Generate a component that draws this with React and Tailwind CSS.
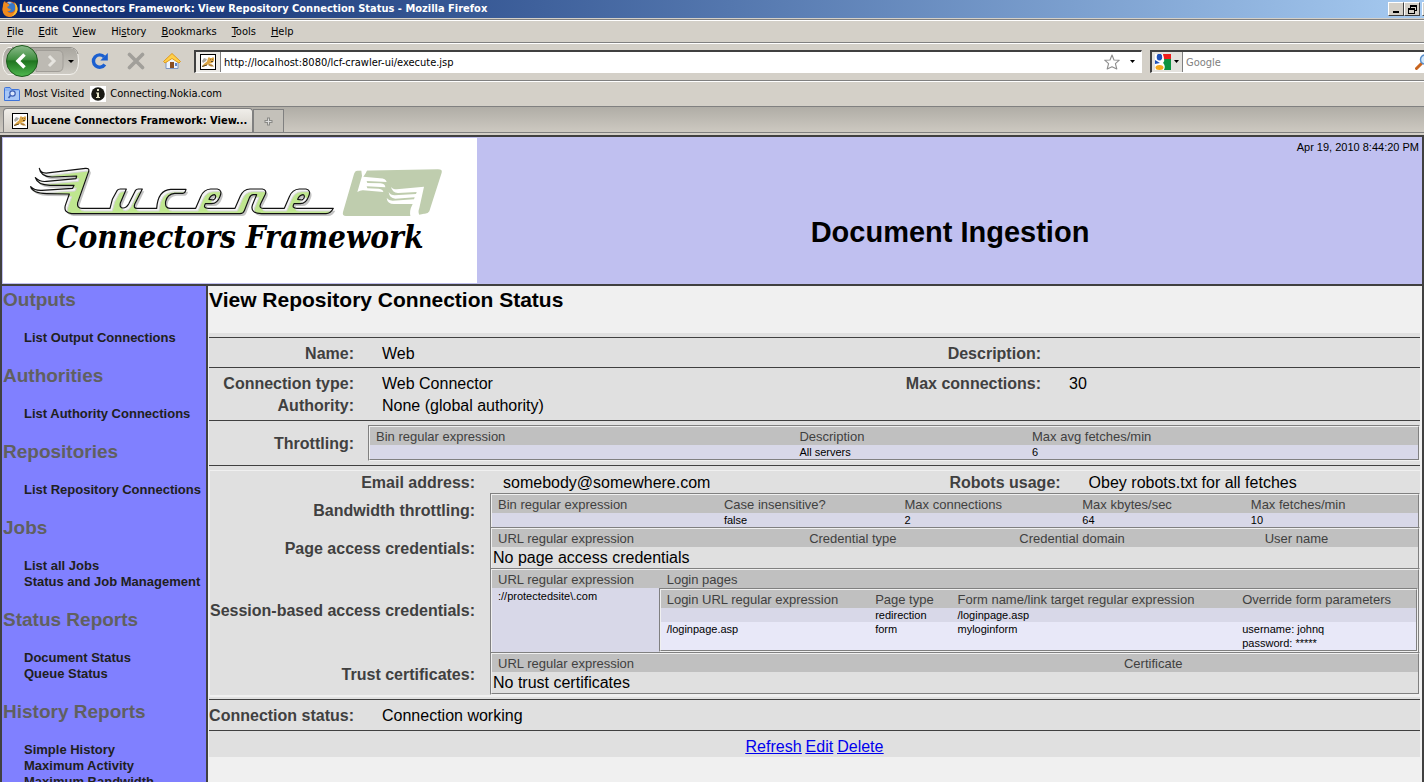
import React from "react";

const chromeFont = "font-['DejaVu_Sans_Condensed','DejaVu_Sans',sans-serif]";

/* ---------- small drawings ---------- */

function FirefoxIcon() {
  return (
    <svg width="16" height="16" viewBox="0 0 16 16" aria-hidden="true">
      <circle cx="8" cy="8" r="7.5" fill="#d9601a" />
      <circle cx="8.5" cy="6.5" r="5" fill="#3a78c8" />
      <path d="M1 4 Q1 1 3 0 Q3 2 6 3 Q8 3 7 5 L5 6 Q6 8 9 8 Q8 11 5 10 Q8 14 12 11 Q14 9 13 5 Q16 8 15 11 Q12 16 7 16 Q1 15 0.5 9 Z" fill="#f08a1d" />
      <path d="M12 1 Q16 4 15.5 9 Q14.5 14 9 15.5 Q14 12 13.5 6 Q13 3 12 1 Z" fill="#f8c33a" />
      <path d="M5 1 Q8 0 10 2 Q8 3 7 2.5 Z" fill="#9cc6ee" />
    </svg>
  );
}

function CatIcon() {
  return (
    <svg width="16" height="16" viewBox="0 0 16 16" aria-hidden="true">
      <rect x="0.5" y="0.5" width="15" height="15" fill="#fff" stroke="#000" />
      <path d="M2 7 L4 4 L7 5 L6 7 L3 9 Z" fill="#a8a8a4" />
      <path d="M8 4 L9 3 L10 4 H12 L13 3 L14 4 V7 L12 9 L10 9.500 L7 11 L3 13 L2 12 L5 9 L7 7.500 Z" fill="#dca545" />
      <path d="M9 10 L12 10.500 L14 12.500 L11 12.500 L8 11 Z" fill="#b07c2c" />
      <path d="M2 12.500 L7 11 M10.500 5.500 H11 M12.500 5.500 H13 M11 7.500 H13" stroke="#4a3a1c" strokeWidth="0.9" />
    </svg>
  );
}

function NavButtons() {
  return (
    <div className="flex h-8 w-[77px] shrink-0 items-center">
      <svg width="77" height="34" viewBox="0 0 77 34" aria-hidden="true">
        <defs>
          <linearGradient id="back" x1="0" y1="0" x2="0" y2="1">
            <stop offset="0" stopColor="#8cba8c" />
            <stop offset="0.45" stopColor="#3f8f3f" />
            <stop offset="0.5" stopColor="#1f741f" />
            <stop offset="1" stopColor="#4fb84f" />
          </linearGradient>
          <linearGradient id="pill" x1="0" y1="0" x2="0" y2="1">
            <stop offset="0" stopColor="#a9a69f" />
            <stop offset="1" stopColor="#cfccc5" />
          </linearGradient>
        </defs>
        <path d="M6 3.500 H68 Q76.500 3.500 76.500 17 Q76.500 30.500 68 30.500 H6 Q0.500 27 0.500 17 Q0.500 7 6 3.500 Z" fill="url(#pill)" stroke="#f4f2ee" />
        <path d="M10 3.500 H68 Q74 3.500 76 10" fill="none" stroke="#8e8b85" />
        <path d="M34 6.500 H56 Q61 6.500 61 12 V22 Q61 27.500 56 27.500 H34 Z" fill="#bdbab3" stroke="#a09d97" />
        <path d="M47 12 L52 17 L47 22" fill="none" stroke="#e6e4df" strokeWidth="3" />
        <circle cx="20" cy="17" r="15.500" fill="url(#back)" stroke="#1d5c1d" />
        <path d="M22.500 10.500 L16 17 L22.500 23.500" fill="none" stroke="#fff" strokeWidth="3.500" />
        <path d="M66 16 H72 L69 19 Z" fill="#000" />
      </svg>
    </div>
  );
}

function ReloadIcon() {
  return (
    <svg width="18" height="18" viewBox="0 0 18 18" aria-hidden="true">
      <path d="M13.800 12.500 A6.200 6.200 0 1 1 13.200 4.800" fill="none" stroke="#1b5fd0" strokeWidth="3.400" />
      <path d="M16.800 1 V8.500 H9.300 Z" fill="#1b5fd0" />
    </svg>
  );
}

function StopIcon() {
  return (
    <svg width="18" height="18" viewBox="0 0 18 18" aria-hidden="true">
      <path d="M2.500 2.500 L15.500 15.500 M15.500 2.500 L2.500 15.500" stroke="#a19f9a" strokeWidth="3.600" strokeLinecap="round" />
    </svg>
  );
}

function HomeIcon() {
  return (
    <svg width="20" height="18" viewBox="0 0 20 18" aria-hidden="true">
      <path d="M4 9 L10 4 L16 9 V16.500 H4 Z" fill="#eef3fb" stroke="#7d96c4" />
      <path d="M1.500 9.500 L10 1.500 L18.500 9.500 L17 11 L10 6.500 L3 11 Z" fill="#ffd04a" stroke="#e0991c" />
      <rect x="8" y="10" width="4" height="6" fill="#8a4f22" />
      <rect x="13" y="11" width="2" height="3" fill="#5d85cc" />
    </svg>
  );
}

function StarIcon() {
  return (
    <svg width="16" height="16" viewBox="0 0 16 16" aria-hidden="true">
      <path d="M8 1 L10 6 L15.300 6.200 L11.400 9.600 L12.800 15 L8 12.800 L3.200 15 L4.600 9.600 L0.700 6.200 L6 6 Z" fill="#fff" stroke="#8c8c8c" strokeWidth="1.100" strokeLinejoin="round" />
    </svg>
  );
}

function Caret() {
  return (
    <svg width="5" height="3" viewBox="0 0 5 3" aria-hidden="true">
      <path d="M0 0 H5 L2.500 3 Z" fill="#000" />
    </svg>
  );
}

function GoogleIcon() {
  return (
    <svg width="16" height="16" viewBox="0 0 16 16" aria-hidden="true">
      <rect width="16" height="16" fill="#fff" />
      <path d="M8 0 H16 V5 H9 Z" fill="#ee1c1c" />
      <path d="M9 5 H16 V16 H9 Q11 12 8 9 Q10 7 9 5 Z" fill="#0c9340" />
      <ellipse cx="4.500" cy="3" rx="2.800" ry="3.500" fill="#1d50b8" />
      <path d="M0 6 L5 9 L0 10 Z" fill="#1d50b8" />
      <ellipse cx="4.500" cy="13.500" rx="4" ry="2.500" fill="#f5a81b" />
      <path d="M7 0 Q9 4 7 6 Q6 8 8 10" fill="none" stroke="#fff" />
    </svg>
  );
}

function MagnifierIcon() {
  return (
    <svg width="16" height="16" viewBox="0 0 16 16" aria-hidden="true">
      <path d="M1.500 14.500 L6.500 9.500" stroke="#c8641e" strokeWidth="3" strokeLinecap="round" />
      <circle cx="10" cy="5.500" r="4.500" fill="#cfe6fa" stroke="#5a8fca" strokeWidth="1.500" />
    </svg>
  );
}

function FolderSearchIcon() {
  return (
    <svg width="16" height="14" viewBox="0 0 16 14" aria-hidden="true">
      <path d="M0.500 1.500 Q0.500 0.500 1.500 0.500 H6 L7.500 2.500 H14.500 Q15.500 2.500 15.500 3.500 V13.500 H0.500 Z" fill="#8fb6f2" stroke="#3f74d8" />
      <rect x="1" y="4" width="14" height="9" fill="#a9c8f6" />
      <circle cx="8.500" cy="6.500" r="2.700" fill="#dbe8fc" stroke="#3b5fb5" strokeWidth="1.200" />
      <path d="M6.500 8.500 L4.500 11" stroke="#3b5fb5" strokeWidth="1.600" />
    </svg>
  );
}

function InfoIcon() {
  return (
    <svg width="16" height="16" viewBox="0 0 16 16" aria-hidden="true">
      <rect width="16" height="16" fill="#fff" />
      <circle cx="8" cy="8" r="6.800" fill="#1a1a14" />
      <path d="M7 3 H9 V5 H7 Z M6 6.500 H9 V11 H10 V12 H6 V11 H7 V7.500 H6 Z" fill="#e8e6c8" />
    </svg>
  );
}

/* Winged ribbon of the logo: one closed outline, traced left to right along the top and back along the bottom. */
const ribbon =
  "M118 97 C121 110 134 113 150 110 L256 97 Q269 96 266 106 L233 200 Q230 217 246 217 H330 L337 190 L351 164 Q354 159 361 159 H379 L361 201 Q358 216 369 216 Q379 216 386 204 L406 164 Q409 159 415 159 H427 L404 205 Q400 217 411 217 H470 Q474 162 512 160 H558 Q556 171 548 172 H524 Q502 174 497 196 Q494 217 510 217 H587 L602 182 Q611 160 632 159 H652 Q668 162 660 181 Q652 203 635 203 H616 Q608 217 625 217 H705 L721 180 Q730 160 750 159 H787 Q801 162 796 175 L782 203 Q776 217 790 217 H853 L868 182 Q877 160 898 159 H918 Q934 162 926 181 Q918 203 901 203 H882 Q874 217 891 217 H1000 Q992 233 978 233 H785 Q750 232 757 208 L770 176 H760 Q752 176 748 186 L733 224 Q730 233 720 233 H215 Q190 230 196 208 L208 174 L140 173 C112 172 95 166 92 152 C102 162 112 164 126 163 L218 157 L222 148 L150 148 C124 147 110 140 106 125 C116 135 124 138 140 136 L228 128 L230 120 L156 123 C134 122 120 112 118 97 Z " +
  "M627 190 Q632 177 643 176 Q650 178 645 188 L640 192 Z M893 190 Q898 177 909 176 Q916 178 911 188 L906 192 Z";

function LuceneLogo() {
  return (
    <svg width="474" height="145" viewBox="9 6 1422 435" role="img" aria-label="Lucene Connectors Framework" className="block">
      <defs>
        <clipPath id="ribbonClip">
          <path d={ribbon} clipRule="evenodd" />
        </clipPath>
      </defs>
      <path d={ribbon} fill="#c4c4c4" fillRule="evenodd" transform="translate(6 7)" />
      <path d={ribbon} fill="#f4f4f4" fillRule="evenodd" />
      <g clipPath="url(#ribbonClip)">
        <path d={ribbon} fill="#bfe68f" fillRule="evenodd" stroke="#d4d4d4" strokeWidth="3" transform="translate(7 8)" />
      </g>
      <path d={ribbon} fill="none" stroke="#111" strokeWidth="3.500" strokeLinejoin="round" />
      <path d="M1072 104 L1314 100 Q1328 100 1325 110 L1288 226 Q1284 234 1272 233 L1240 240 H1038 Q1026 240 1029 228 L1062 114 Q1065 104 1072 104 Z" fill="#bfcdae" />
      <path d="M1083 96 L1102 101 Q1098 112 1090 122 L1140 127 Q1158 128 1160 138 L1100 135 L1102 141 L1142 142 Q1156 144 1156 154 L1100 151 L1102 157 L1136 158 Q1150 160 1150 168 L1090 163 Q1082 162 1072 168 L1086 120 Z" fill="#fff" />
      <path d="M1272 152 L1190 160 Q1178 160 1173 152 Q1176 170 1194 171 L1250 168 L1248 174 L1184 178 Q1172 178 1166 168 Q1168 186 1186 188 L1244 184 L1242 190 L1178 194 Q1166 194 1160 186 Q1162 204 1182 204 H1238 Q1226 226 1232 244 L1260 240 Q1252 230 1258 216 Z" fill="#fff" />
      <text x="168" y="336" fontFamily="'DejaVu Serif Condensed','DejaVu Serif',serif" fontWeight="700" fontStyle="italic" fontSize="94" fill="#000">
        Connectors Framework
      </text>
    </svg>
  );
}

/* ---------- browser window ---------- */

function TitleButton({ label, children }) {
  return (
    <button aria-label={label} className="flex h-[14px] w-4 shrink-0 items-center justify-center border border-t-white border-r-[#404040] border-b-[#404040] border-l-white bg-[#d4d0c8]">
      {children}
    </button>
  );
}

function TitleBar() {
  return (
    <div className="flex h-[18px] items-center overflow-hidden bg-linear-to-r from-[#0a246a] to-[#a6caf0] pl-[2px]">
      <FirefoxIcon />
      <span className={`${chromeFont} flex-1 pt-px pl-px text-[11px] font-bold whitespace-nowrap text-white`}>
        Lucene Connectors Framework: View Repository Connection Status - Mozilla Firefox
      </span>
      <div className="-mr-[14px] flex">
        <TitleButton label="Minimize">
          <svg width="8" height="8" viewBox="0 0 8 8"><path d="M1 6 H7 V8 H1 Z" fill="#000" /></svg>
        </TitleButton>
        <TitleButton label="Restore">
          <svg width="9" height="9" viewBox="0 0 9 9"><path d="M2 0 H9 V6 H7 V5 H8 V2 H3 V3 H2 Z M0 3 H7 V9 H0 Z M1 5 V8 H6 V5 Z" fill="#000" fillRule="evenodd" /></svg>
        </TitleButton>
        <span className="w-[2px]" />
        <TitleButton label="Close" />
      </div>
    </div>
  );
}

const menus = [
  ["", "F", "ile"],
  ["", "E", "dit"],
  ["", "V", "iew"],
  ["Hi", "s", "tory"],
  ["", "B", "ookmarks"],
  ["", "T", "ools"],
  ["", "H", "elp"],
];

function Browser() {
  return (
    <header className={`${chromeFont} shrink-0 bg-[#d4d0c8] text-[11px] text-black`}>
      <TitleBar />
      <nav className="mt-px flex h-[24px] items-center gap-[15px] border-t border-b border-[#808080] pt-[2px] pl-[7px] shadow-[inset_0_1px_0_#fff]">
        {menus.map(([a, key, b]) => (
          <button key={a + key + b} className="leading-4">
            {a}
            <span className="underline">{key}</span>
            {b}
          </button>
        ))}
      </nav>
      <div className="flex h-[37px] items-center overflow-hidden border-t border-white pb-[2px] pl-[2px]">
        <NavButtons />
        <button aria-label="Reload" className="ml-[12px] shrink-0"><ReloadIcon /></button>
        <button aria-label="Stop" className="ml-[18px] shrink-0"><StopIcon /></button>
        <button aria-label="Home" className="ml-[17px] shrink-0"><HomeIcon /></button>
        <div className="ml-[12px] flex h-[23px] flex-1 items-center border-t-2 border-r border-b border-l-2 border-t-[#404040] border-r-white border-b-white border-l-[#404040] bg-white">
          <span className="flex h-full w-[25px] items-center justify-center border-r border-[#808080] bg-[#eceae6]"><CatIcon /></span>
          <input aria-label="Location" defaultValue="http://localhost:8080/lcf-crawler-ui/execute.jsp" className="h-full min-w-0 flex-1 bg-transparent pt-px pl-[3px] outline-none" />
          <button aria-label="Bookmark this page"><StarIcon /></button>
          <button aria-label="Show history" className="mr-[6px] ml-[10px]"><Caret /></button>
        </div>
        <div className="-mr-[8px] ml-[8px] flex h-[23px] w-[282px] shrink-0 items-center border-t-2 border-b border-l-2 border-t-[#404040] border-b-white border-l-[#404040] bg-white">
          <button aria-label="Search engine" className="flex h-full w-[31px] items-center gap-[3px] border-r border-[#808080] bg-[#e4e2de] pl-[3px]">
            <GoogleIcon />
            <Caret />
          </button>
          <input aria-label="Search" placeholder="Google" className="h-full min-w-0 flex-1 pt-px pl-[3px] outline-none placeholder:text-[#808080]" />
          <button aria-label="Go" className="mr-px"><MagnifierIcon /></button>
        </div>
      </div>
      <div className="flex h-[26px] items-center gap-[6px] border-t border-[#808080] pl-1 shadow-[inset_0_1px_0_#fff]">
        <a href="#visited" className="flex items-center gap-1"><FolderSearchIcon /><span className="pt-[2px]">Most Visited</span></a>
        <a href="#nokia" className="flex items-center gap-1"><InfoIcon /><span className="pt-[2px]">Connecting.Nokia.com</span></a>
      </div>
      <div className="flex h-[27px] items-end border-t border-b border-[#808080] bg-linear-to-b from-[#b0ada6] to-[#cdc9c1] pl-[3px]">
        <button className="flex h-[24px] w-[250px] items-center gap-[3px] overflow-hidden rounded-t-sm border border-b-0 border-[#808080] bg-linear-to-b from-[#f0eeea] to-[#d4d0c8] pl-2 font-bold whitespace-nowrap">
          <CatIcon />
          <span className="pt-[2px]">Lucene Connectors Framework: View...</span>
        </button>
        <button aria-label="New tab" className="flex h-[23px] w-[31px] items-center justify-center border border-b-0 border-[#808080] bg-[#c4c1ba]">
          <svg width="9" height="9" viewBox="0 0 9 9"><path d="M4.500 0.500 V8.500 M0.500 4.500 H8.500" stroke="#8a8a86" strokeWidth="3" /><path d="M4.500 1.500 V7.500 M1.500 4.500 H7.500" stroke="#ddd" /></svg>
        </button>
      </div>
      <div className="h-[2px]" />
    </header>
  );
}

/* ---------- page ---------- */

const sections = [
  ["Outputs", ["List Output Connections"]],
  ["Authorities", ["List Authority Connections"]],
  ["Repositories", ["List Repository Connections"]],
  ["Jobs", ["List all Jobs", "Status and Job Management"]],
  ["Status Reports", ["Document Status", "Queue Status"]],
  ["History Reports", ["Simple History", "Maximum Activity", "Maximum Bandwidth"]],
];

function Sidebar() {
  return (
    <nav className="w-[204px] shrink-0 overflow-hidden bg-[#8080ff] pt-[3px] pl-px">
      {sections.map(([title, items]) => (
        <section key={title} className="mb-[19px]">
          <h2 className="mb-[19px] text-[19px] leading-[22px] font-bold text-[#606060]">{title}</h2>
          <ul className="pl-[21px]">
            {items.map((item) => (
              <li key={item} className="text-[13px] leading-4 font-bold whitespace-nowrap text-[#202020]">
                <a href="#menu">{item}</a>
              </li>
            ))}
          </ul>
        </section>
      ))}
    </nav>
  );
}

function Label({ children }) {
  return <div className="self-center pt-[2px] text-right leading-5 font-bold whitespace-nowrap text-[#404040]">{children}</div>;
}

function Value({ children }) {
  return <div className="pt-[2px] leading-5">{children}</div>;
}

function Box({ children, last = false }) {
  return (
    <div className={`border-t border-r border-l border-t-[#808080] border-r-[#f0f0f0] border-l-[#808080] ${last ? "border-b border-b-[#f0f0f0]" : ""}`}>
      <div className={`border-t border-r border-l border-t-[#f0f0f0] border-r-[#808080] border-l-[#f0f0f0] ${last ? "border-b border-b-[#808080]" : ""}`}>
        {children}
      </div>
    </div>
  );
}

function DataTable({ columns, rows = [], empty }) {
  return (
    <table className="w-full table-fixed border-collapse">
      <thead>
        <tr className="bg-[#c0c0c0]">
          {columns.map(([name, width]) => (
            <th key={name} className={`${width} h-[18px] pt-[2px] pl-[6px] text-left text-[13px] leading-4 font-normal whitespace-nowrap text-[#404040]`}>
              {name}
            </th>
          ))}
        </tr>
      </thead>
      <tbody>
        {rows.map((row, r) => (
          <tr key={r} className={r % 2 ? "bg-[#e8e8f8]" : "bg-[#d8d8e8]"}>
            {row.map((cell, c) => (
              <td key={c} className="h-[14px] pl-[6px] align-top text-[11px] leading-[14px] whitespace-pre-line">
                {cell}
              </td>
            ))}
          </tr>
        ))}
        {empty && (
          <tr>
            <td colSpan={columns.length} className="h-[21px] pt-px pl-px leading-5">{empty}</td>
          </tr>
        )}
      </tbody>
    </table>
  );
}

const mainGrid = "grid grid-cols-[145px_491fr_140fr_351fr] gap-x-7";
const boxGrid = "grid grid-cols-[265px_minmax(0,1fr)] gap-x-[15px]";

function ConnectionDetails() {
  return (
    <div className="mr-[2px] ml-px bg-[#e0e0e0] pt-1 text-[16px]">
      <div className={`${mainGrid} border-t border-[#404040] pt-1 pb-[3px]`}>
        <Label>Name:</Label>
        <Value>Web</Value>
        <Label>Description:</Label>
        <Value />
      </div>
      <div className={`${mainGrid} border-t border-[#404040] py-1`}>
        <Label>Connection type:</Label>
        <Value>Web Connector</Value>
        <Label>Max connections:</Label>
        <Value>30</Value>
        <Label>Authority:</Label>
        <Value>None (global authority)</Value>
      </div>
      <div className="grid grid-cols-[145px_minmax(0,1fr)] gap-x-[14px] border-t border-[#404040] py-1">
        <Label>Throttling:</Label>
        <Box last>
          <DataTable
            columns={[["Bin regular expression", "w-[40.4%]"], ["Description", "w-[22.2%]"], ["Max avg fetches/min", "w-[37.4%]"]]}
            rows={[["", "All servers", "6"]]}
          />
        </Box>
      </div>
      <div className="border-t border-[#404040] pt-1 pb-[2px]">
        <div className="border-t border-b-2 border-l border-[#f0f0f0]">
          <div className="grid grid-cols-[265px_389fr_140fr_331fr] gap-x-7">
            <Label>Email address:</Label>
            <Value>somebody@somewhere.com</Value>
            <Label>Robots usage:</Label>
            <Value>Obey robots.txt for all fetches</Value>
          </div>
          <div className={boxGrid}>
            <Label>Bandwidth throttling:</Label>
            <Box>
              <DataTable
                columns={[
                  ["Bin regular expression", "w-[24.4%]"],
                  ["Case insensitive?", "w-[19.5%]"],
                  ["Max connections", "w-[19.2%]"],
                  ["Max kbytes/sec", "w-[18.2%]"],
                  ["Max fetches/min", "w-[18.7%]"],
                ]}
                rows={[["", "false", "2", "64", "10"]]}
              />
            </Box>
            <Label>Page access credentials:</Label>
            <Box>
              <DataTable
                columns={[
                  ["URL regular expression", "w-[33.6%]"],
                  ["Credential type", "w-[22.7%]"],
                  ["Credential domain", "w-[26.5%]"],
                  ["User name", "w-[17.2%]"],
                ]}
                empty="No page access credentials"
              />
            </Box>
            <Label>Session-based access credentials:</Label>
            <Box>
              <table className="w-full table-fixed border-collapse">
                <thead>
                  <tr className="bg-[#c0c0c0] text-left text-[13px] leading-4 text-[#404040]">
                    <th className="w-[18%] pt-[2px] pl-[6px] font-normal">URL regular expression</th>
                    <th className="w-[82%] pt-[2px] pl-[8px] font-normal">Login pages</th>
                  </tr>
                </thead>
                <tbody>
                  <tr className="bg-[#d8d8e8] align-top">
                    <td className="pt-px pl-[6px] text-[11px] leading-[14px]">://protectedsite\.com</td>
                    <td>
                      <Box last>
                        <DataTable
                          columns={[
                            ["Login URL regular expression", "w-[27.6%]"],
                            ["Page type", "w-[10.9%]"],
                            ["Form name/link target regular expression", "w-[37.7%]"],
                            ["Override form parameters", "w-[23.8%]"],
                          ]}
                          rows={[
                            ["", "redirection", "/loginpage.asp", ""],
                            ["/loginpage.asp", "form", "myloginform", "username: johnq\npassword: *****"],
                          ]}
                        />
                      </Box>
                    </td>
                  </tr>
                </tbody>
              </table>
            </Box>
            <Label>Trust certificates:</Label>
            <Box last>
              <DataTable
                columns={[["URL regular expression", "w-[67.6%]"], ["Certificate", "w-[32.4%]"]]}
                empty="No trust certificates"
              />
            </Box>
          </div>
        </div>
      </div>
      <div className="grid grid-cols-[145px_minmax(0,1fr)] gap-x-7 border-t border-b border-[#404040] py-1">
        <Label>Connection status:</Label>
        <Value>Connection working</Value>
      </div>
      <div className="flex justify-center gap-1 pt-[6px] leading-5 text-[#0000ee] underline">
        <a href="#refresh">Refresh</a>
        <a href="#edit">Edit</a>
        <a href="#delete">Delete</a>
      </div>
    </div>
  );
}

export default function App() {
  return (
    <div className="flex h-screen flex-col overflow-hidden font-['Liberation_Sans',Arial,sans-serif] text-black">
      <Browser />
      <div className="flex min-h-0 flex-1 flex-col overflow-hidden border-x-2 border-t-2 border-[#404040]">
        <div className="flex shrink-0 border-b-2 border-[#404040] bg-[#c0c0f0]">
          <div className="border border-[#c0c0f0] bg-white">
            <LuceneLogo />
          </div>
          <div className="flex flex-1 flex-col">
            <div className="pt-[3px] pr-[3px] text-right text-[11px] leading-[14px]">Apr 19, 2010 8:44:20 PM</div>
            <h1 className="mt-[62px] text-center text-[29px] leading-8 font-bold">Document Ingestion</h1>
          </div>
        </div>
        <div className="flex flex-1">
          <Sidebar />
          <main className="min-w-0 flex-1 border-l-2 border-[#404040] bg-[#f0f0f0]">
            <h2 className="mb-[19px] pl-px text-[21px] leading-7 font-bold">View Repository Connection Status</h2>
            <ConnectionDetails />
          </main>
        </div>
      </div>
    </div>
  );
}
